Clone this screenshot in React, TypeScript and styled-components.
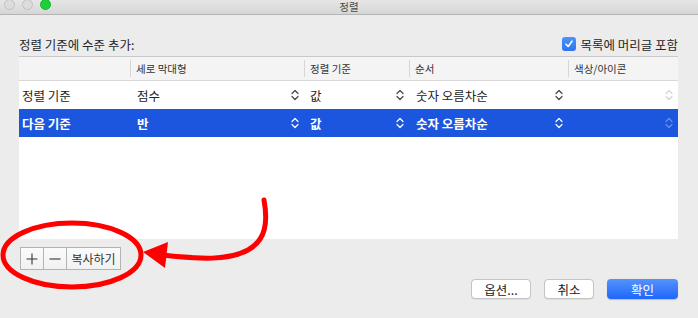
import React from "react";
import styled, { createGlobalStyle } from "styled-components";

const Global = createGlobalStyle`
  html, body { margin: 0; padding: 0; background: #ececec; }
  body { font-family: "Noto Sans CJK KR", "Noto Sans", sans-serif; }
`;

const Window = styled.div`
  position: relative;
  width: 698px;
  height: 318px;
  background: #ececec;
  overflow: hidden;
  display: flex;
  flex-direction: column;
`;

const TitleBar = styled.div`
  height: 14px;
  flex: none;
  background: linear-gradient(#e6e6e6, #d6d6d6);
  border-bottom: 1px solid #b4b4b4;
  position: relative;
  display: flex;
  align-items: flex-start;
  justify-content: center;
`;

const Lights = styled.div`
  position: absolute;
  left: 4px;
  top: -1px;
  display: flex;
  gap: 7px;
`;

const Light = styled.span<{ $c: string; $b: string }>`
  width: 11px;
  height: 11px;
  border-radius: 50%;
  background: ${(p) => p.$c};
  border: 0.5px solid ${(p) => p.$b};
  box-sizing: border-box;
`;

const Title = styled.div`
  font-size: 10.5px;
  color: #4a4a4a;
  line-height: 13px;
`;

const Body = styled.div`
  padding: 18px 20px 0 19px;
  display: flex;
  flex-direction: column;
`;

const TopRow = styled.div`
  display: flex;
  align-items: center;
  justify-content: space-between;
  height: 22px;
  margin-bottom: 1px;
`;

const Label = styled.div`
  font-size: 12.5px;
  color: #262626;
`;

const CheckWrap = styled.label`
  display: flex;
  align-items: center;
  gap: 4px;
  font-size: 12.5px;
  color: #262626;
`;

const CheckBox = styled.span`
  width: 14px;
  height: 14px;
  border-radius: 3px;
  background: linear-gradient(#4c93fb, #2b74f1);
  display: flex;
  align-items: center;
  justify-content: center;
`;

const Table = styled.div`
  border-top: 1px solid #c9c9c9;
  background: #fff;
  height: 182px;
  display: flex;
  flex-direction: column;
`;

const Cols = "111px 174px 105px 159px 1fr";

const HeaderRow = styled.div`
  display: grid;
  grid-template-columns: ${Cols};
  height: 23px;
  background: #f4f4f4;
  border-bottom: 1px solid #d8d8d8;
  align-items: center;
`;

const HeadCell = styled.div<{ $sep?: boolean }>`
  font-size: 10.5px;
  color: #333;
  padding-left: 5px;
  height: 17px;
  line-height: 17px;
  border-left: ${(p) => (p.$sep ? "1px solid #d6d6d6" : "1px solid transparent")};
`;

const Row = styled.div<{ $sel?: boolean }>`
  display: grid;
  grid-template-columns: ${Cols};
  height: 28px;
  align-items: center;
  background: ${(p) => (p.$sel ? "#1c56df" : "#fff")};
  color: ${(p) => (p.$sel ? "#fff" : "#222")};
  font-weight: ${(p) => (p.$sel ? 700 : 400)};
  font-size: 12.5px;
`;

const Cell = styled.div<{ $pad?: number }>`
  display: flex;
  align-items: center;
  justify-content: space-between;
  padding-left: ${(p) => p.$pad ?? 6}px;
  padding-right: 5px;
  white-space: nowrap;
`;

const Footer = styled.div`
  display: flex;
  flex-direction: column;
`;

const Group = styled.div`
  margin-top: 8px;
  margin-left: 1px;
  display: flex;
  width: max-content;
  border: 1px solid #b3b3b3;
  background: linear-gradient(#fbfbfb, #f1f1f1);
  height: 21px;
`;

const GroupBtn = styled.div<{ $w: number; $sep?: boolean }>`
  width: ${(p) => p.$w}px;
  display: flex;
  align-items: center;
  justify-content: center;
  font-size: 12px;
  color: #333;
  border-left: ${(p) => (p.$sep ? "1px solid #b3b3b3" : "none")};
`;

const Buttons = styled.div`
  display: flex;
  justify-content: flex-end;
  gap: 13px;
  margin-top: 9px;
  padding-right: 0px;
`;

const Btn = styled.div<{ $w: number; $primary?: boolean }>`
  width: ${(p) => p.$w}px;
  height: 20px;
  box-sizing: border-box;
  border-radius: 4px;
  display: flex;
  align-items: center;
  justify-content: center;
  font-size: 12.5px;
  background: ${(p) => (p.$primary ? "linear-gradient(#5593fd, #1f66f9)" : "#fff")};
  color: ${(p) => (p.$primary ? "#fff" : "#222")};
  border: ${(p) => (p.$primary ? "none" : "1px solid #c4c4c4")};
  box-shadow: ${(p) => (p.$primary ? "0 0.5px 1px rgba(0,0,0,0.2)" : "0 0.5px 0.5px rgba(0,0,0,0.12)")};
`;

const Overlay = styled.svg`
  position: absolute;
  left: 0;
  top: 0;
  pointer-events: none;
`;

const Stepper = ({ light, color }: { light?: boolean; color: string }) => (
  <svg width="8" height="12" viewBox="0 0 8 12">
    <path
      d="M1 4.5 L4 1.5 L7 4.5 M1 7.5 L4 10.5 L7 7.5"
      fill="none"
      stroke={color}
      strokeOpacity={light ? 0.35 : 1}
      strokeWidth="1.2"
      strokeLinecap="round"
      strokeLinejoin="round"
    />
  </svg>
);

const rows = [
  { a: "정렬 기준", b: "점수", c: "값", d: "숫자 오름차순", sel: false },
  { a: "다음 기준", b: "반", c: "값", d: "숫자 오름차순", sel: true },
];

export default function App() {
  return (
    <>
      <Global />
      <Window>
        <TitleBar>
          <Lights>
            <Light $c="#dcdcdc" $b="#c2c2c2" />
            <Light $c="#dcdcdc" $b="#c2c2c2" />
            <Light $c="#1fcf3a" $b="#18b02e" />
          </Lights>
          <Title>정렬</Title>
        </TitleBar>
        <Body>
          <TopRow>
            <Label>정렬 기준에 수준 추가:</Label>
            <CheckWrap>
              <CheckBox>
                <svg width="10" height="10" viewBox="0 0 10 10">
                  <path d="M2 5.2 L4.2 7.5 L8 2.2" fill="none" stroke="#fff" strokeWidth="1.6" strokeLinecap="round" strokeLinejoin="round" />
                </svg>
              </CheckBox>
              목록에 머리글 포함
            </CheckWrap>
          </TopRow>
          <Table>
            <HeaderRow>
              <HeadCell />
              <HeadCell $sep>세로 막대형</HeadCell>
              <HeadCell $sep>정렬 기준</HeadCell>
              <HeadCell $sep>순서</HeadCell>
              <HeadCell $sep>색상/아이콘</HeadCell>
            </HeaderRow>
            {rows.map((r) => {
              const col = r.sel ? "#fff" : "#444";
              return (
                <Row key={r.a} $sel={r.sel}>
                  <Cell $pad={3}>{r.a}</Cell>
                  <Cell $pad={7}>
                    {r.b}
                    <Stepper color={col} />
                  </Cell>
                  <Cell $pad={6}>
                    {r.c}
                    <Stepper color={col} />
                  </Cell>
                  <Cell $pad={7}>
                    {r.d}
                    <Stepper color={col} />
                  </Cell>
                  <Cell>
                    <span />
                    <Stepper color={r.sel ? "#fff" : "#888"} light />
                  </Cell>
                </Row>
              );
            })}
          </Table>
          <Footer>
            <Group>
              <GroupBtn $w={22}>
                <svg width="12" height="12" viewBox="0 0 12 12">
                  <path d="M6 0.5 V11.5 M0.5 6 H11.5" stroke="#333" strokeWidth="1.1" />
                </svg>
              </GroupBtn>
              <GroupBtn $w={22} $sep>
                <svg width="12" height="12" viewBox="0 0 12 12">
                  <path d="M0.5 6 H11.5" stroke="#333" strokeWidth="1.1" />
                </svg>
              </GroupBtn>
              <GroupBtn $w={53} $sep>복사하기</GroupBtn>
            </Group>
            <Buttons>
              <Btn $w={60}>옵션...</Btn>
              <Btn $w={50}>취소</Btn>
              <Btn $w={71} $primary>확인</Btn>
            </Buttons>
          </Footer>
        </Body>
        <Overlay width="698" height="318" viewBox="0 0 698 318">
          <ellipse cx="72" cy="255" rx="69" ry="32" fill="none" stroke="#f00" strokeWidth="5" />
          <path
            d="M264 200 C268 222 266 240 248 250 C228 261 200 259 162 255"
            fill="none"
            stroke="#f00"
            strokeWidth="5"
            strokeLinecap="round"
          />
          <polygon points="143,252 168,242 165,268" fill="#f00" />
        </Overlay>
      </Window>
    </>
  );
}
